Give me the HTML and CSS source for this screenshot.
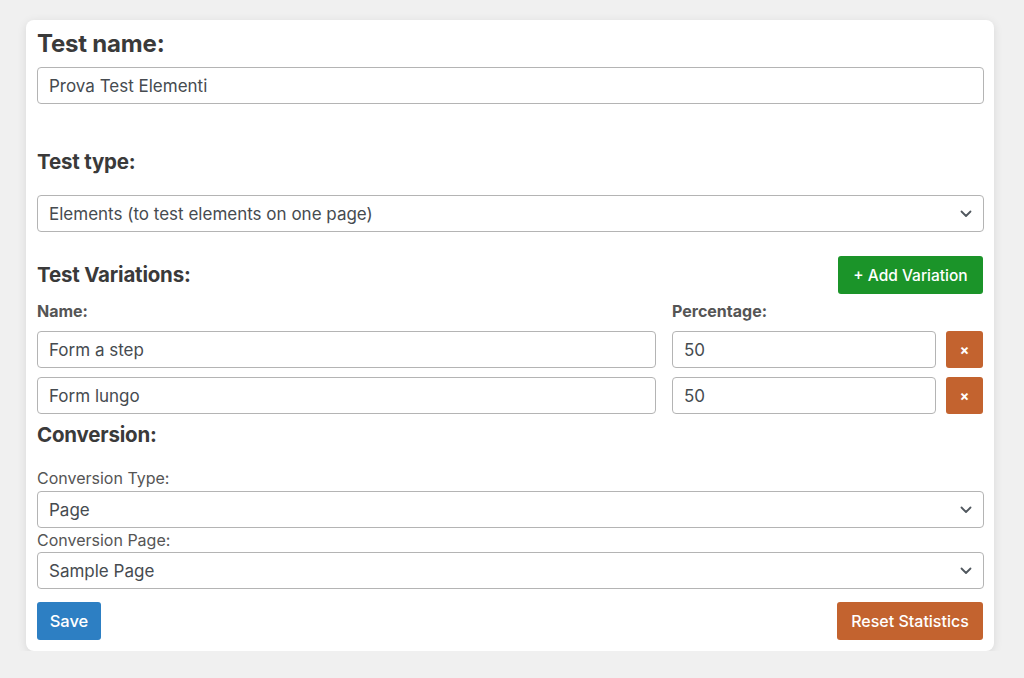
FILE: index.html
```html
<!DOCTYPE html>
<html lang="it">
<head>
    <meta charset="UTF-8">
    <meta name="viewport" content="width=device-width, initial-scale=1.0">
    <title>A/B Test</title>
    <link rel="stylesheet" href="styles.css">
</head>
<body>
    <div class="card">
        <form class="test-form">
            <h2 class="field-title name-title">Test name:</h2>
            <input type="text" class="field" value="Prova Test Elementi">

            <h2 class="field-title type-title">Test type:</h2>
            <div class="select-wrap">
                <select class="field">
                    <option>Elements (to test elements on one page)</option>
                </select>
                <svg class="chevron" width="12" height="8" viewBox="0 0 12 8"><path d="M1.5 1.5 6 6l4.5-4.5" fill="none" stroke="#50575e" stroke-width="1.8" stroke-linecap="round" stroke-linejoin="round"/></svg>
            </div>

            <div class="variations-head">
                <h2 class="field-title">Test Variations:</h2>
                <button type="button" class="btn btn-green">+ Add Variation</button>
            </div>

            <div class="var-row var-labels">
                <span class="col-name">Name:</span>
                <span class="col-pct">Percentage:</span>
                <span class="col-del"></span>
            </div>
            <div class="var-row">
                <input type="text" class="field col-name" value="Form a step">
                <input type="text" class="field col-pct" value="50">
                <button type="button" class="btn btn-orange col-del">&times;</button>
            </div>
            <div class="var-row">
                <input type="text" class="field col-name" value="Form lungo">
                <input type="text" class="field col-pct" value="50">
                <button type="button" class="btn btn-orange col-del">&times;</button>
            </div>

            <h2 class="field-title conv-title">Conversion:</h2>

            <label class="sub-label conv-type">Conversion Type:</label>
            <div class="select-wrap">
                <select class="field">
                    <option>Page</option>
                </select>
                <svg class="chevron" width="12" height="8" viewBox="0 0 12 8"><path d="M1.5 1.5 6 6l4.5-4.5" fill="none" stroke="#50575e" stroke-width="1.8" stroke-linecap="round" stroke-linejoin="round"/></svg>
            </div>

            <label class="sub-label conv-page">Conversion Page:</label>
            <div class="select-wrap">
                <select class="field">
                    <option>Sample Page</option>
                </select>
                <svg class="chevron" width="12" height="8" viewBox="0 0 12 8"><path d="M1.5 1.5 6 6l4.5-4.5" fill="none" stroke="#50575e" stroke-width="1.8" stroke-linecap="round" stroke-linejoin="round"/></svg>
            </div>

            <div class="actions">
                <button type="submit" class="btn btn-blue">Save</button>
                <button type="button" class="btn btn-orange btn-reset">Reset Statistics</button>
            </div>
        </form>
    </div>
</body>
</html>
```

FILE: styles.css
```css
:root {
    --text: #3a3a3a;
    --muted: #555;
    --border: #b4b4b4;
    --green: #1b9429;
    --orange: #c3632f;
    --blue: #2d7fc3;
}

* {
    box-sizing: border-box;
    margin: 0;
    padding: 0;
    font-family: Inter, 'Helvetica Neue', Arial, sans-serif;
}

body {
    background-color: #f0f0f0;
    color: var(--text);
    padding: 20px 30px 0 26px;
}

.card {
    background: white;
    border-radius: 8px;
    box-shadow: 0 2px 10px rgba(0, 0, 0, 0.1);
    padding: 12px 10px 11px 11px;
    width: 968px;
}

.field-title {
    font-size: 20.5px;
    line-height: 24px;
    font-weight: 700;
    color: var(--text);
    letter-spacing: -0.2px;
    margin-bottom: 11px;
}

.name-title {
    font-size: 24px;
}

.type-title {
    margin-top: 46px;
    margin-bottom: 21px;
}

.field {
    display: block;
    width: 100%;
    height: 37px;
    padding: 0 11px;
    border: 1px solid var(--border);
    border-radius: 4px;
    background: white;
    font-size: 17px;
    color: #464b50;
    outline: none;
}

select.field {
    appearance: none;
    -webkit-appearance: none;
}

.select-wrap {
    position: relative;
}

.chevron {
    position: absolute;
    right: 12px;
    top: 15px;
    pointer-events: none;
}

.variations-head {
    display: flex;
    justify-content: space-between;
    align-items: center;
    margin-top: 24px;
}

.variations-head .field-title {
    margin-bottom: 0;
}

.btn {
    border: none;
    border-radius: 3px;
    color: white;
    font-size: 16px;
    font-weight: 500;
    height: 38px;
    padding: 0 14px;
    white-space: nowrap;
    cursor: pointer;
}

.btn-green {
    background-color: var(--green);
    width: 145px;
    padding: 0;
    font-size: 15.5px;
    margin-right: 1px;
}

.btn-orange {
    background-color: var(--orange);
}

.btn-blue {
    background-color: var(--blue);
    width: 64px;
    padding: 0;
    font-size: 16.5px;
}

.var-row {
    display: flex;
    align-items: center;
    margin-bottom: 9px;
}

.var-row .col-name {
    flex: 1;
}

.var-row .col-pct {
    width: 264px;
    margin-left: 16px;
}

.var-row .col-del {
    width: 37px;
    height: 37px;
    margin-left: 10px;
    margin-right: 1px;
    padding: 0;
    font-size: 14px;
    font-weight: 700;
}

.var-labels {
    margin-top: 7px;
    margin-bottom: 10px;
    font-size: 16px;
    line-height: 20px;
    font-weight: 700;
    color: var(--muted);
}

.var-labels .col-pct {
    margin-left: 15px;
}

.var-labels .col-del {
    height: 20px;
}

.conv-title {
    margin-top: 2px;
    margin-bottom: 0;
}

.sub-label {
    display: block;
    font-size: 16px;
    line-height: 20px;
    color: var(--muted);
}

.conv-type {
    margin-top: 21px;
    margin-bottom: 3px;
}

.conv-page {
    margin-top: 2px;
    margin-bottom: 2px;
}

.actions {
    display: flex;
    justify-content: space-between;
    margin-top: 13px;
}

.btn-reset {
    width: 146px;
    padding: 0;
    margin-right: 1px;
}
```
